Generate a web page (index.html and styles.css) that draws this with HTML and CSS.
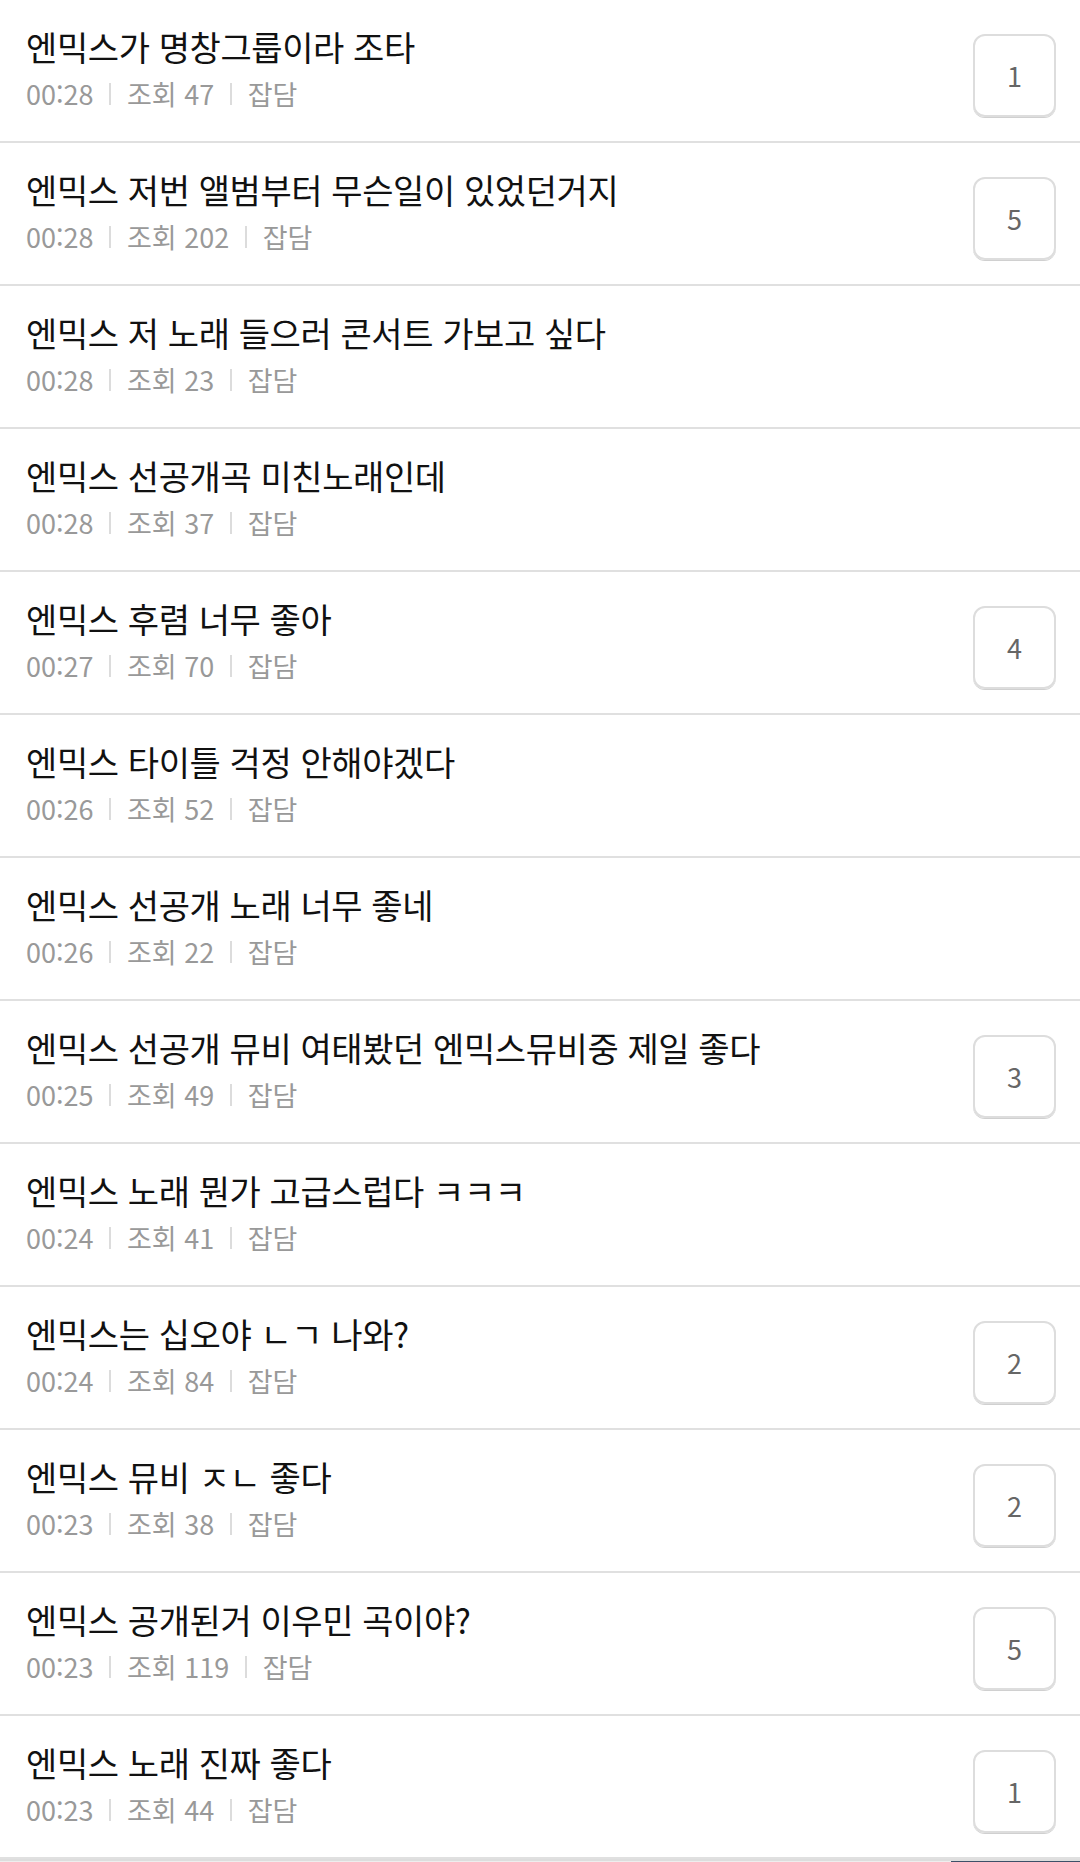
FILE: index.html
```html
<!DOCTYPE html>
<html lang="ko">
<head>
  <meta charset="UTF-8">
  <meta name="viewport" content="width=device-width, initial-scale=1.0">
  <title>잡담 게시판</title>
  <link rel="stylesheet" href="styles.css">
</head>
<body>
  <ul class="board-list">
    <li class="board-item">
      <div class="item-body">
        <p class="item-title">엔믹스가 명창그룹이라 조타</p>
        <div class="item-meta"><span>00:28</span><span class="sep"></span><span>조회 47</span><span class="sep"></span><span>잡담</span></div>
      </div>
      <span class="comment-count">1</span>
    </li>
    <li class="board-item">
      <div class="item-body">
        <p class="item-title">엔믹스 저번 앨범부터 무슨일이 있었던거지</p>
        <div class="item-meta"><span>00:28</span><span class="sep"></span><span>조회 202</span><span class="sep"></span><span>잡담</span></div>
      </div>
      <span class="comment-count">5</span>
    </li>
    <li class="board-item">
      <div class="item-body">
        <p class="item-title">엔믹스 저 노래 들으러 콘서트 가보고 싶다</p>
        <div class="item-meta"><span>00:28</span><span class="sep"></span><span>조회 23</span><span class="sep"></span><span>잡담</span></div>
      </div>
    </li>
    <li class="board-item">
      <div class="item-body">
        <p class="item-title">엔믹스 선공개곡 미친노래인데</p>
        <div class="item-meta"><span>00:28</span><span class="sep"></span><span>조회 37</span><span class="sep"></span><span>잡담</span></div>
      </div>
    </li>
    <li class="board-item">
      <div class="item-body">
        <p class="item-title">엔믹스 후렴 너무 좋아</p>
        <div class="item-meta"><span>00:27</span><span class="sep"></span><span>조회 70</span><span class="sep"></span><span>잡담</span></div>
      </div>
      <span class="comment-count">4</span>
    </li>
    <li class="board-item">
      <div class="item-body">
        <p class="item-title">엔믹스 타이틀 걱정 안해야겠다</p>
        <div class="item-meta"><span>00:26</span><span class="sep"></span><span>조회 52</span><span class="sep"></span><span>잡담</span></div>
      </div>
    </li>
    <li class="board-item">
      <div class="item-body">
        <p class="item-title">엔믹스 선공개 노래 너무 좋네</p>
        <div class="item-meta"><span>00:26</span><span class="sep"></span><span>조회 22</span><span class="sep"></span><span>잡담</span></div>
      </div>
    </li>
    <li class="board-item">
      <div class="item-body">
        <p class="item-title">엔믹스 선공개 뮤비 여태봤던 엔믹스뮤비중 제일 좋다</p>
        <div class="item-meta"><span>00:25</span><span class="sep"></span><span>조회 49</span><span class="sep"></span><span>잡담</span></div>
      </div>
      <span class="comment-count">3</span>
    </li>
    <li class="board-item">
      <div class="item-body">
        <p class="item-title">엔믹스 노래 뭔가 고급스럽다 ㅋㅋㅋ</p>
        <div class="item-meta"><span>00:24</span><span class="sep"></span><span>조회 41</span><span class="sep"></span><span>잡담</span></div>
      </div>
    </li>
    <li class="board-item">
      <div class="item-body">
        <p class="item-title">엔믹스는 십오야 ㄴㄱ 나와?</p>
        <div class="item-meta"><span>00:24</span><span class="sep"></span><span>조회 84</span><span class="sep"></span><span>잡담</span></div>
      </div>
      <span class="comment-count">2</span>
    </li>
    <li class="board-item">
      <div class="item-body">
        <p class="item-title">엔믹스 뮤비 ㅈㄴ 좋다</p>
        <div class="item-meta"><span>00:23</span><span class="sep"></span><span>조회 38</span><span class="sep"></span><span>잡담</span></div>
      </div>
      <span class="comment-count">2</span>
    </li>
    <li class="board-item">
      <div class="item-body">
        <p class="item-title">엔믹스 공개된거 이우민 곡이야?</p>
        <div class="item-meta"><span>00:23</span><span class="sep"></span><span>조회 119</span><span class="sep"></span><span>잡담</span></div>
      </div>
      <span class="comment-count">5</span>
    </li>
    <li class="board-item">
      <div class="item-body">
        <p class="item-title">엔믹스 노래 진짜 좋다</p>
        <div class="item-meta"><span>00:23</span><span class="sep"></span><span>조회 44</span><span class="sep"></span><span>잡담</span></div>
      </div>
      <span class="comment-count">1</span>
    </li>
  </ul>

  <div class="tab-bar">
    <span class="tab"></span>
    <span class="tab active"></span>
  </div>
</body>
</html>
```

FILE: styles.css
```css
body {
  margin: 0;
  background-color: white;
  font-family: "Noto Sans CJK KR", "Noto Sans", sans-serif;
}
.board-list {
  list-style: none;
  margin: 0;
  padding: 0;
}
.board-item {
  display: flex;
  align-items: center;
  height: 141px;
  padding: 0 24px 0 26px;
  border-bottom: 2px solid #e0e0e0;
}
.item-body {
  flex: 1;
  min-width: 0;
  padding-bottom: 6px;
}
.item-title {
  margin: 0;
  font-size: 34px;
  line-height: 44px;
  letter-spacing: -0.4px;
  color: #111;
  white-space: nowrap;
}
.item-meta {
  display: flex;
  align-items: center;
  margin-top: 8px;
  font-size: 27px;
  line-height: 34px;
  color: #999;
}
.sep {
  width: 1.5px;
  height: 22px;
  margin: 0 16px;
  background-color: #dcdcdc;
}
.comment-count {
  display: flex;
  align-items: center;
  justify-content: center;
  width: 79px;
  height: 79px;
  margin-top: 10px;
  border: 2px solid #dddddd;
  border-radius: 12px;
  box-shadow: 0 1px 0 #d0d0d0;
  font-size: 27px;
  color: #666;
}
.tab-bar {
  display: flex;
  border-top: 2px solid #ddd;
  height: 4px;
  background-color: #eee;
}
.tab {
  flex: 1;
}
.tab.active {
  flex: 0 0 129px;
  background-color: #3d5068;
}
```
